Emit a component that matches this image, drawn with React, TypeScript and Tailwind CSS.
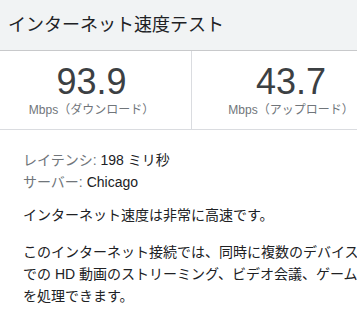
import React from "react";

const font = { fontFamily: '"Liberation Sans", Arial, "Noto Sans CJK JP", sans-serif' };

export default function App() {
  return (
    <div className="w-[357px] h-[309px] overflow-hidden bg-white" style={font}>
      <div className="w-[384px]">
        <div className="h-[51px] bg-[#f1f3f4] border-b border-[#c8c9cb] flex items-center pl-[8px] text-[18px] text-[#202124]">
          インターネット速度テスト
        </div>
        <div className="h-[79px] flex border-b border-[#dadce0]">
          <div className="w-[192px] border-r border-[#dadce0] flex flex-col items-center pt-[13px] pr-[8px]">
            <div className="text-[36px] leading-[36px] text-[#3c4043]">93.9</div>
            <div className="text-[12px] leading-[16px] text-[#70757a] mt-[2px]">Mbps（ダウンロード）</div>
          </div>
          <div className="flex-1 flex flex-col items-center pt-[13px] pl-[6px]">
            <div className="text-[36px] leading-[36px] text-[#3c4043]">43.7</div>
            <div className="text-[12px] leading-[16px] text-[#70757a] mt-[2px]">Mbps（アップロード）</div>
          </div>
        </div>
        <div className="pl-[23px] pt-[19px] text-[14px] text-[#202124] whitespace-nowrap">
          <div className="leading-[22px]">
            <span className="text-[#70757a]">レイテンシ:</span> 198 ミリ秒
          </div>
          <div className="leading-[22px]">
            <span className="text-[#70757a]">サーバー:</span> Chicago
          </div>
          <div className="leading-[22px] mt-[11px]">インターネット速度は非常に高速です。</div>
          <div className="leading-[22px] mt-[15px]">
            <div>このインターネット接続では、同時に複数のデバイスで</div>
            <div>での HD 動画のストリーミング、ビデオ会議、ゲームの</div>
            <div>を処理できます。</div>
          </div>
        </div>
      </div>
    </div>
  );
}
